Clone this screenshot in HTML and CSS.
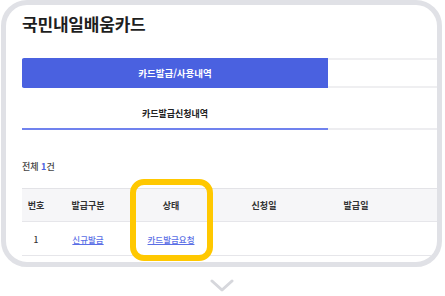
FILE: index.html
```html
<!DOCTYPE html>
<html lang="ko">
<head>
<meta charset="utf-8">
<link rel="stylesheet" href="styles.css">
</head>
<body>
<div class="frame">
  <h1 class="title">국민내일배움카드</h1>
  <div class="tabs">
    <div class="tab tab-active">카드발급/사용내역</div>
    <div class="tab"></div>
  </div>
  <div class="subtabs">
    <div class="subtab subtab-active">카드발급신청내역</div>
    <div class="subtab"></div>
  </div>
  <p class="count">전체 <span class="count-num">1</span>건</p>
  <div class="table">
    <div class="row head">
      <div class="cell">번호</div>
      <div class="cell">발급구분</div>
      <div class="cell">상태</div>
      <div class="cell">신청일</div>
      <div class="cell">발급일</div>
      <div class="cell"></div>
    </div>
    <div class="row">
      <div class="cell">1</div>
      <div class="cell"><a class="link" href="#">신규발급</a></div>
      <div class="cell"><a class="link" href="#">카드발급요청</a></div>
      <div class="cell"></div>
      <div class="cell"></div>
      <div class="cell"></div>
    </div>
  </div>
  <div class="highlight"></div>
</div>
<div class="more">
  <svg width="24" height="14" viewBox="0 0 24 14"><polyline points="2,2 12,11 22,2" fill="none" stroke="#d6d7dc" stroke-width="3" stroke-linecap="round" stroke-linejoin="round"/></svg>
</div>
</body>
</html>
```
FILE: styles.css
```css
* { box-sizing: border-box; }
html, body { margin: 0; padding: 0; background: #fff; }
body {
  width: 445px;
  height: 296px;
  overflow: hidden;
  font-family: "Noto Sans CJK KR", "Noto Sans", sans-serif;
  color: #222;
}
.frame {
  position: relative;
  margin-left: 1px;
  width: 441px;
  height: 267px;
  border: 5px solid #e0e1e6;
  border-radius: 26px;
  overflow: hidden;
  padding: 8px 0 0 16px;
  background: #fff;
}
.title {
  margin: 0;
  font-size: 17px;
  line-height: 22px;
  font-weight: 700;
  color: #1e1e1e;
  letter-spacing: -0.2px;
}
.tabs {
  display: flex;
  width: 612px;
  margin-top: 23px;
}
.tab {
  width: 306px;
  height: 30px;
  display: flex;
  align-items: center;
  justify-content: center;
  font-size: 9.5px;
  font-weight: 700;
  color: #444;
  border-top: 2px solid #efeff1;
  border-bottom: 2px solid #efeff1;
}
.tab-active {
  background: #4a61e0;
  color: #fff;
  border-color: #4a61e0;
  border-radius: 2px 0 0 2px;
}
.subtabs {
  display: flex;
  width: 612px;
}
.subtab {
  width: 306px;
  height: 42px;
  padding-top: 18px;
  text-align: center;
  font-size: 9px;
  line-height: 16px;
  font-weight: 700;
  color: #222;
  border-bottom: 2px solid #ededf0;
}
.subtab-active { border-bottom-color: #7082ee; }
.count {
  margin: 30px 0 0;
  font-size: 9px;
  line-height: 14px;
  font-weight: 500;
  color: #444;
}
.count-num { color: #4a61e0; font-weight: 700; }
.table {
  margin-top: 14px;
  width: 640px;
}
.row {
  display: grid;
  grid-template-columns: 28px 76px 90px 96px 88px 1fr;
  height: 34px;
  align-items: center;
  border-bottom: 1px solid #e6e6ea;
}
.head {
  background: #f6f6f8;
  border-top: 1px solid #e3e3e7;
  font-weight: 700;
}
.cell {
  text-align: center;
  font-size: 8.5px;
  font-weight: 500;
  color: #333;
}
.head .cell { font-size: 9px; font-weight: 700; color: #333; }
.link {
  color: #5b6fe6;
  text-decoration: underline;
}
.highlight {
  position: absolute;
  left: 124px;
  top: 174px;
  width: 83px;
  height: 82px;
  border: 6px solid #ffc800;
  border-radius: 14px;
}
.more {
  display: flex;
  justify-content: center;
  margin-top: 12px;
  padding-right: 2px;
}
.more svg { display: block; }
```
